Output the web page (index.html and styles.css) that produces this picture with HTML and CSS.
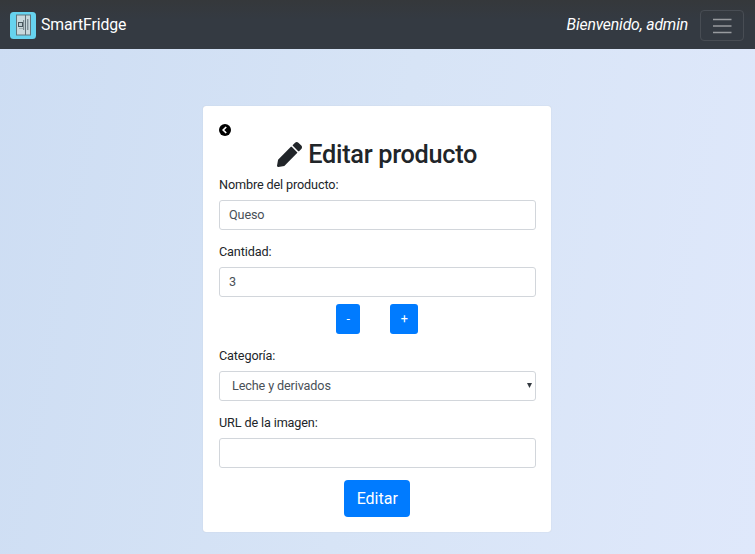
FILE: index.html
```html
<!DOCTYPE html>
<html lang="es">
<head>
<meta charset="utf-8">
<title>SmartFridge</title>
<link rel="stylesheet" href="styles.css">
</head>
<body>
<nav class="navbar">
  <a class="brand">
    <svg class="logo" viewBox="0 0 26 27">
      <rect width="26" height="27" rx="3.5" fill="#66d3ef"/>
      <rect x="6.5" y="3" width="14" height="20" fill="#c8d8dc" stroke="#60767e"/>
      <path d="M15.5 3v20M17.8 7v11" stroke="#607078" stroke-width="1" fill="none"/>
      <path d="M13.6 8v10" stroke="#7c8a8f" stroke-width="1.2"/>
      <rect x="8.5" y="10.5" width="4" height="4" fill="#bccbd0" stroke="#48575e"/>
      <path d="M9 16.5h4" stroke="#a0adb1"/>
    </svg>
    <span class="brand-name">SmartFridge</span>
  </a>
  <em class="welcome">Bienvenido, admin</em>
  <button class="toggler" type="button" aria-label="Menú">
    <svg width="24" height="24" viewBox="0 0 24 24"><path d="M3 5.5h18.500M3 12h18.500M3 18.500h18.500" stroke="#989b9f" stroke-width="1.500" fill="none"/></svg>
  </button>
</nav>
<main class="card">
  <a class="back" aria-label="Volver">
    <svg width="12" height="12" viewBox="0 0 12 12"><circle cx="6" cy="6" r="6" fill="#000"/><path d="M7.200 3L4.200 6l3 3" fill="none" stroke="#fff" stroke-width="1.700"/></svg>
  </a>
  <h1 class="title">
    <svg class="pencil" viewBox="0 0 512 512"><path fill="currentColor" d="M497.900 142.100l-46.100 46.100c-4.700 4.700-12.300 4.700-17 0l-111-111c-4.700-4.700-4.700-12.300 0-17l46.100-46.100c18.700-18.700 49.100-18.700 67.900 0l60.100 60.100c18.800 18.700 18.800 49.100 0 68zM284.200 99.800L21.600 362.400.4 483.900c-2.900 16.400 11.400 30.600 27.800 27.800l121.500-21.300 262.600-262.600c4.700-4.700 4.700-12.300 0-17l-111-111c-4.800-4.700-12.400-4.700-17.100 0z"/></svg>
    <span class="title-text">Editar producto</span>
  </h1>
  <form class="form">
    <div class="group">
      <label class="label" for="nombre">Nombre del producto:</label>
      <input class="control" id="nombre" type="text" value="Queso">
    </div>
    <div class="group group-steps">
      <label class="label" for="cantidad">Cantidad:</label>
      <input class="control" id="cantidad" type="text" value="3">
      <div class="steps">
        <button class="btn step-minus" type="button">-</button>
        <button class="btn step-plus" type="button">+</button>
      </div>
    </div>
    <div class="group">
      <label class="label" for="categoria">Categoría:</label>
      <div class="select-box">
        <select class="control select" id="categoria"><option>Leche y derivados</option></select>
        <svg class="arrow" viewBox="0 0 5 5"><path d="M0 0h5L2.500 5z" fill="#343a40"/></svg>
      </div>
    </div>
    <div class="group">
      <label class="label" for="url">URL de la imagen:</label>
      <input class="control" id="url" type="text">
    </div>
    <button class="btn submit" type="button">Editar</button>
  </form>
</main>
</body>
</html>
```
FILE: styles.css
```css
* { box-sizing: border-box; }
body {
  margin: 0;
  height: 554px;
  overflow: hidden;
  font-family: Roboto, sans-serif;
  font-size: 12.65px;
  letter-spacing: -0.13px;
  color: #212529;
  background: linear-gradient(100deg, #cdddf3 0%, #d7e4f6 50%, #dfe8fb 100%);
}
.navbar {
  display: flex;
  align-items: center;
  height: 49px;
  padding: 3px 11px 0 10px;
  background: linear-gradient(#35383b, #343a42 40%);
  color: #fff;
  font-size: 15.8px;
}
.brand { display: flex; align-items: center; gap: 5px; margin-top: -1px; }
.logo { width: 26px; height: 27px; }
.brand-name { margin-top: -3px; }
.welcome { margin: -4px 12px 0 auto; letter-spacing: -0.17px; }
.toggler {
  display: flex;
  align-items: center;
  justify-content: center;
  width: 44px;
  height: 31px;
  margin-top: -1px;
  padding: 0;
  border: 1px solid #484d54;
  border-radius: 4px;
  background: none;
}
.card {
  width: 348px;
  height: 426px;
  margin: 57px 0 0 203px;
  padding: 18px 15.5px 0 16px;
  border-radius: 3px;
  background: #fff;
  box-shadow: 0 0 1px #b4bdca;
}
.back { display: block; height: 12px; }
.back svg { display: block; }
.title {
  display: flex;
  align-items: center;
  justify-content: center;
  gap: 6px;
  height: 30px;
  margin: 3px 0 7px;
  font-size: 25.3px;
  line-height: 30px;
  font-weight: 500;
  letter-spacing: -0.3px;
}
.title-text { margin-top: 2px; }
.pencil { width: 25px; height: 25px; }
.form { display: flex; flex-direction: column; }
.group { margin-bottom: 12.500px; }
.group-steps { margin-bottom: 13.500px; }
.label { display: block; height: 17px; margin-bottom: 7px; line-height: 17px; }
.control {
  display: block;
  width: 317px;
  height: 30px;
  padding: 0 9px 1px;
  border: 1px solid #d2d6db;
  border-radius: 3px;
  background: #fff;
  color: #495057;
  font: inherit;
  letter-spacing: inherit;
  outline: none;
}
.steps { display: flex; justify-content: center; gap: 30px; margin-top: 7px; }
.btn {
  height: 30px;
  padding: 0;
  border: 0;
  border-radius: 3px;
  background: #007bff;
  color: #fff;
  font: inherit;
}
.step-minus { width: 24px; }
.step-plus { width: 28px; }
.select-box { position: relative; }
.select { appearance: none; padding-left: 12px; }
.arrow { position: absolute; right: 4px; top: 12px; width: 5px; height: 5px; }
.submit { align-self: center; width: 66px; height: 37px; border-radius: 4px; font-size: 16px; }
```
